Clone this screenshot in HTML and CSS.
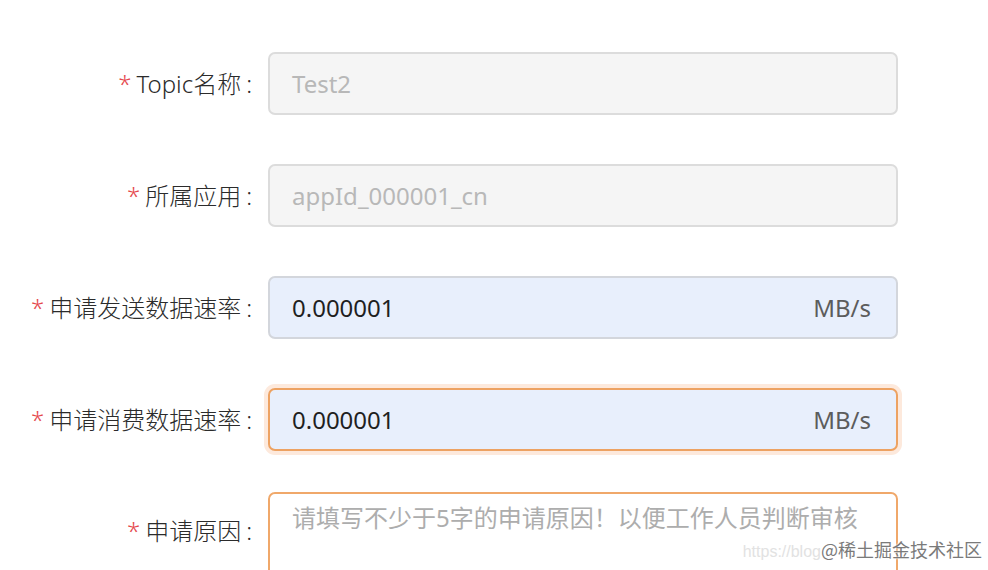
FILE: index.html
```html
<!DOCTYPE html>
<html lang="zh-CN">
<head>
<meta charset="utf-8">
<title>申请Topic</title>
<link rel="stylesheet" href="styles.css">
</head>
<body>
<form class="form">
  <div class="row">
    <label class="label"><span class="req">*</span>Topic名称<span class="colon">:</span></label>
    <div class="field field--disabled"><span class="value">Test2</span></div>
  </div>
  <div class="row">
    <label class="label"><span class="req">*</span>所属应用<span class="colon">:</span></label>
    <div class="field field--disabled"><span class="value">appId_000001_cn</span></div>
  </div>
  <div class="row">
    <label class="label"><span class="req">*</span>申请发送数据速率<span class="colon">:</span></label>
    <div class="field field--filled"><span class="value">0.000001</span><span class="suffix">MB/s</span></div>
  </div>
  <div class="row">
    <label class="label"><span class="req">*</span>申请消费数据速率<span class="colon">:</span></label>
    <div class="field field--filled field--focus"><span class="value">0.000001</span><span class="suffix">MB/s</span></div>
  </div>
  <div class="row row--area">
    <label class="label label--area"><span class="req">*</span>申请原因<span class="colon">:</span></label>
    <div class="area"><span class="placeholder">请填写不少于5字的申请原因！以便工作人员判断审核</span></div>
  </div>
</form>
<div class="watermark"><span class="wm-url">https://blog</span><span class="wm-tag">@稀土掘金技术社区</span></div>
</body>
</html>
```

FILE: styles.css
```css
html, body {
  margin: 0;
  padding: 0;
  background: #ffffff;
  overflow: hidden;
}
body {
  width: 988px;
  height: 570px;
  position: relative;
  font-family: "Noto Sans", "Noto Sans CJK SC", sans-serif;
  font-size: 24px;
  color: #262626;
}
.form {
  padding-top: 52px;
  display: flex;
  flex-direction: column;
  gap: 49px;
}
.row {
  display: flex;
  align-items: center;
}
.row--area {
  align-items: flex-start;
  margin-top: -8px;
}
.label {
  width: 256px;
  box-sizing: border-box;
  padding-right: 4px;
  text-align: right;
  line-height: 34px;
  white-space: nowrap;
  color: #2b2b2b;
  font-weight: 300;
}
.label--area {
  padding-top: 22px;
}
.req {
  color: #e5484d;
  margin-right: 5px;
}
.colon {
  margin-left: 5px;
}
.field {
  width: 630px;
  height: 63px;
  box-sizing: border-box;
  margin-left: 12px;
  border: 2px solid #dcdcdc;
  border-radius: 7px;
  padding: 0 25px 0 22px;
  display: flex;
  align-items: center;
  justify-content: space-between;
}
.field--disabled {
  background: #f5f5f5;
  color: #b8b8b8;
}
.field--filled {
  background: #e8effc;
  border-color: #d3d6dc;
  color: #1f1f1f;
}
.field--focus {
  border-color: #eda262;
  box-shadow: 0 0 0 4px #fde9dc;
}
.suffix {
  color: #5c5c5c;
}
.area {
  width: 630px;
  height: 130px;
  box-sizing: border-box;
  margin-left: 12px;
  border: 2px solid #f0a86a;
  border-radius: 7px;
  padding: 7px 22px;
  line-height: 34px;
  background: #ffffff;
}
.placeholder {
  color: #adadad;
}
.watermark {
  position: absolute;
  right: 6px;
  bottom: 7px;
  line-height: 22px;
  white-space: nowrap;
}
.wm-url {
  font-family: "Liberation Sans", sans-serif;
  font-size: 16px;
  color: #e2e2e2;
}
.wm-tag {
  font-family: "Noto Sans CJK SC", sans-serif;
  font-size: 18px;
  color: #7a7a7a;
  text-shadow: 0 0 2px #ffffff, 0 0 2px #ffffff;
}
```
